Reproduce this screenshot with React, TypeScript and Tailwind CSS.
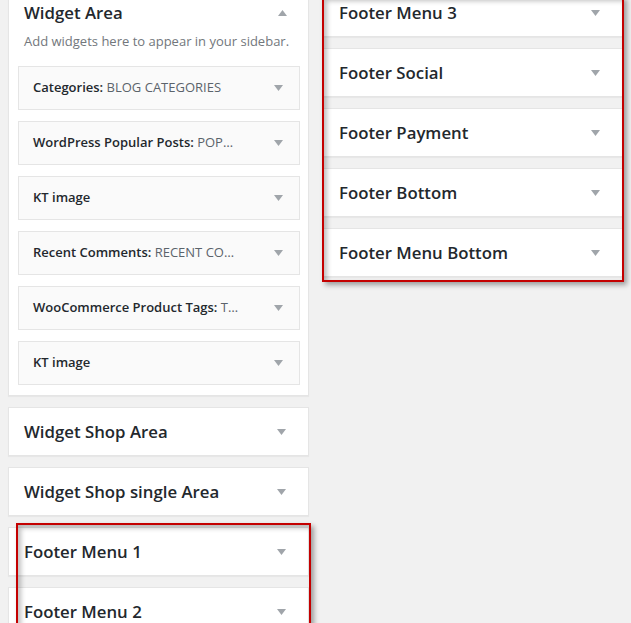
const font = { fontFamily: '"Open Sans", "Noto Sans", Arial, sans-serif' };

const Arrow = ({ up = false }: { up?: boolean }) => (
  <svg width="9" height="6" viewBox="0 0 9 6" className="shrink-0">
    <path d={up ? "M0 6 L4.5 0 L9 6 Z" : "M0 0 L9 0 L4.5 6 Z"} fill="#a0a5aa" />
  </svg>
);

interface Widget {
  name: string;
  title?: string;
}

const widgets: Widget[] = [
  { name: "Categories:", title: "BLOG CATEGORIES" },
  { name: "WordPress Popular Posts:", title: "POP…" },
  { name: "KT image" },
  { name: "Recent Comments:", title: "RECENT CO…" },
  { name: "WooCommerce Product Tags:", title: "T…" },
  { name: "KT image" },
];

const Sidebar = ({ name }: { name: string }) => (
  <div className="bg-white border border-[#e5e5e5] shadow-[0_1px_1px_rgba(0,0,0,0.04)] h-[49px] flex items-center justify-between pl-[15px] pr-[22px]">
    <h2 className="text-[16.8px] font-semibold text-[#23282d] leading-6">{name}</h2>
    <Arrow />
  </div>
);

const App = () => {
  return (
    <div style={font} className="relative h-[623px] overflow-hidden bg-[#f1f1f1]">
      <div className="flex gap-[14px] pl-2 -mt-3">
        <div className="w-[301px] flex flex-col gap-[11px]">
          <div className="bg-white border border-[#e5e5e5] shadow-[0_1px_1px_rgba(0,0,0,0.04)] pl-[9px] pr-[8px] pb-[10px]">
            <div className="flex items-center justify-between pl-[6px] pr-[13px] pt-3">
              <h2 className="text-[16.8px] font-semibold text-[#23282d] leading-6">Widget Area</h2>
              <Arrow up />
            </div>
            <p className="text-[13px] text-[#72777c] leading-[18px] mt-[7px] pl-[6px]">
              Add widgets here to appear in your sidebar.
            </p>
            <div className="flex flex-col gap-[11px] mt-[16px]">
              {widgets.map((w, i) => (
                <div
                  key={i}
                  className="h-[44px] bg-[#fafafa] border border-[#e5e5e5] flex items-center justify-between pl-[14px] pr-[16px]"
                >
                  <h3 className="text-[13px] text-[#23282d] font-semibold whitespace-nowrap">
                    {w.name}
                    {w.title && <span className="font-normal text-[#5b636b]"> {w.title}</span>}
                  </h3>
                  <Arrow />
                </div>
              ))}
            </div>
          </div>
          <Sidebar name="Widget Shop Area" />
          <Sidebar name="Widget Shop single Area" />
          <Sidebar name="Footer Menu 1" />
          <Sidebar name="Footer Menu 2" />
        </div>

        <div className="w-[300px] flex flex-col gap-[11px]">
          <Sidebar name="Footer Menu 3" />
          <Sidebar name="Footer Social" />
          <Sidebar name="Footer Payment" />
          <Sidebar name="Footer Bottom" />
          <Sidebar name="Footer Menu Bottom" />
        </div>
      </div>

      {/* highlight boxes */}
      <div className="absolute left-[322px] top-[-4px] w-[302px] h-[286px] border-2 border-[#c40000] shadow-[3px_3px_5px_rgba(0,0,0,0.35),inset_3px_3px_5px_rgba(0,0,0,0.25)]" />
      <div className="absolute left-[16px] top-[523px] w-[295px] h-[120px] border-2 border-[#c40000] shadow-[3px_3px_5px_rgba(0,0,0,0.35),inset_3px_3px_5px_rgba(0,0,0,0.25)]" />
    </div>
  );
};

export default App;
